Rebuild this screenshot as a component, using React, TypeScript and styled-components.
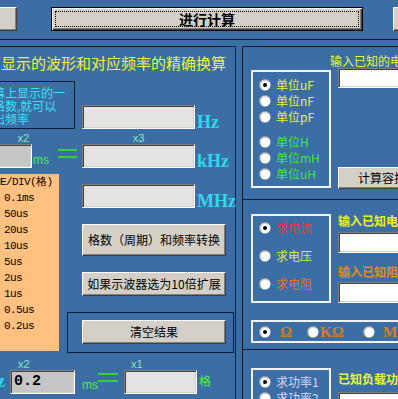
import React from "react";
import styled, { createGlobalStyle } from "styled-components";

const CJK = `"Noto Sans CJK SC", "Noto Sans", sans-serif`;
const LINE = "#0e1d33";
const BLUE = "#3a6ea5";

const GlobalStyle = createGlobalStyle`
  * { box-sizing: border-box; }
  html, body { margin: 0; padding: 0; background: ${BLUE}; }
  body { font-family: ${CJK}; }
`;

const Screen = styled.div`
  width: 398px;
  height: 399px;
  overflow: hidden;
  background: ${BLUE};
`;

const TopBar = styled.div`
  display: flex;
  align-items: flex-start;
  height: 40px;
  padding-top: 7px;
  border-bottom: 1px solid ${LINE};
`;

const FormButton = styled.div<{ $w: number; $h: number; $ml?: number; $mt?: number }>`
  flex: none;
  width: ${({ $w }) => $w}px;
  height: ${({ $h }) => $h}px;
  margin-left: ${({ $ml }) => $ml ?? 0}px;
  margin-top: ${({ $mt }) => $mt ?? 0}px;
  background: #d4d0c8;
  border: 1px solid;
  border-color: #fff #404040 #404040 #fff;
  box-shadow: inset -1px -1px 0 #808080;
  font: 12px/1 ${CJK};
  color: #000;
  display: flex;
  align-items: center;
  justify-content: center;
  white-space: nowrap;
  overflow: hidden;
`;

const DefaultButton = styled(FormButton)`
  border: 1px solid #000;
  box-shadow: inset 1px 1px 0 #fff, inset -1px -1px 0 #404040, inset -2px -2px 0 #808080;
  padding: 3px;
`;

const FocusRect = styled.div`
  flex: 1;
  align-self: stretch;
  border: 1px dotted #000;
  display: flex;
  align-items: center;
  justify-content: center;
  font: bold 14px/1 ${CJK};
`;

const Body = styled.div`
  display: flex;
  margin-top: 6px;
`;

const LeftPanel = styled.div`
  flex: none;
  width: 239px;
  height: 360px;
  margin-left: -3px;
  border: 1px solid ${LINE};
  border-bottom: none;
`;

const RightPanel = styled.div`
  flex: none;
  width: 200px;
  margin-left: 6px;
  border-top: 1px solid ${LINE};
  border-left: 1px solid ${LINE};
`;

const Title = styled.div<{ $color: string; $size?: number; $bold?: boolean; $mt?: number; $ml?: number }>`
  color: ${({ $color }) => $color};
  font: ${({ $bold }) => ($bold ? 700 : 400)} ${({ $size }) => $size ?? 12}px / ${({ $size }) => ($size ?? 12) + 2}px ${CJK};
  margin-top: ${({ $mt }) => $mt ?? 0}px;
  margin-left: ${({ $ml }) => $ml ?? 0}px;
  white-space: nowrap;
`;

const Row = styled.div<{ $mt: number; $align?: string }>`
  display: flex;
  align-items: ${({ $align }) => $align ?? "flex-start"};
  margin-top: ${({ $mt }) => $mt}px;
`;

const NoteFrame = styled.div`
  flex: none;
  width: 77px;
  height: 48px;
  border: 1px solid ${LINE};
  padding-top: 4px;
  overflow: hidden;
`;

const NoteLine = styled.div`
  margin-left: -6px;
  color: #3ee0f8;
  font: 12px/13px ${CJK};
  white-space: nowrap;
`;

const TextBox = styled.div<{ $w: number; $h: number; $tone?: "light" | "gray" | "white"; $ml?: number; $mt?: number }>`
  flex: none;
  width: ${({ $w }) => $w}px;
  height: ${({ $h }) => $h}px;
  margin-left: ${({ $ml }) => $ml ?? 0}px;
  margin-top: ${({ $mt }) => $mt ?? 0}px;
  background: ${({ $tone }) => ($tone === "gray" ? "#c6c6c6" : $tone === "white" ? "#ffffff" : "#e3e3e3")};
  border: 1px solid;
  border-color: #808080 #fff #fff #808080;
  box-shadow: inset 1px 1px 0 #404040, inset -1px -1px 0 #d4d0c8;
  padding: 3px 0 0 3px;
  font: bold 15px/15px "Liberation Mono", monospace;
  color: #000;
  white-space: nowrap;
  overflow: hidden;
`;

const UnitLabel = styled.div<{ $ml?: number; $mb?: number }>`
  flex: none;
  align-self: flex-end;
  margin-left: ${({ $ml }) => $ml ?? 2}px;
  margin-bottom: ${({ $mb }) => $mb ?? 0}px;
  color: #2fd8ec;
  font: bold 18px/18px "Liberation Serif", serif;
  white-space: nowrap;
`;

const SmallUnit = styled.div<{ $ml?: number; $mb?: number }>`
  flex: none;
  align-self: flex-end;
  margin-left: ${({ $ml }) => $ml ?? 0}px;
  margin-bottom: ${({ $mb }) => $mb ?? 0}px;
  color: #4cf04c;
  font: 12px/12px "Liberation Sans", ${CJK};
`;

const EqualSign = styled.div<{ $w: number; $ml?: number; $mt?: number; $mb?: number; $self: string }>`
  flex: none;
  align-self: ${({ $self }) => $self};
  width: ${({ $w }) => $w}px;
  height: 9px;
  margin-left: ${({ $ml }) => $ml ?? 0}px;
  margin-top: ${({ $mt }) => $mt ?? 0}px;
  margin-bottom: ${({ $mb }) => $mb ?? 0}px;
  border-top: 2px solid #35d035;
  border-bottom: 2px solid #35d035;
`;

const Field = styled.div<{ $ml?: number }>`
  flex: none;
  display: flex;
  flex-direction: column;
  margin-left: ${({ $ml }) => $ml ?? 0}px;
`;

const FieldLabel = styled.div<{ $align: "left" | "center" | "right"; $inset?: number }>`
  height: 11px;
  color: #86e8b4;
  font: 11px/11px "Liberation Sans", sans-serif;
  text-align: ${({ $align }) => $align};
  padding-left: ${({ $align, $inset }) => ($align === "left" ? $inset ?? 0 : 0)}px;
  padding-right: ${({ $align, $inset }) => ($align === "right" ? $inset ?? 0 : 0)}px;
`;

const TimeList = styled.div`
  flex: none;
  width: 61px;
  height: 177px;
  background: #ffc080;
  padding-left: 6px;
  overflow: hidden;
  color: #000;
  font: 11px/16px "Liberation Mono", monospace;
  letter-spacing: -0.6px;
`;

const TimeHead = styled.div`
  margin-left: -22px;
  white-space: nowrap;
`;

const ButtonColumn = styled.div`
  flex: none;
  width: 167px;
  margin-left: 8px;
  display: flex;
  flex-direction: column;
`;

const MhzRow = styled.div`
  display: flex;
  margin-top: 10px;
  padding-left: 15px;
`;

const ClearFrame = styled.div`
  height: 41px;
  margin-top: 16px;
  border: 1px solid ${LINE};
  padding: 7px 0 0 14px;
`;

const Section = styled.div<{ $h: number; $top?: boolean }>`
  height: ${({ $h }) => $h}px;
  border-top: ${({ $top }) => ($top ? `1px solid ${LINE}` : "none")};
`;

const SectionRow = styled.div`
  display: flex;
  align-items: flex-start;
`;

const RadioFrame = styled.div<{ $h: number; $mt: number; $pt: number }>`
  flex: none;
  width: 80px;
  height: ${({ $h }) => $h}px;
  margin: ${({ $mt }) => $mt}px 0 0 8px;
  border: 2px solid #f2f2f2;
  padding: ${({ $pt }) => $pt}px 0 0 6px;
`;

const RadioRow = styled.div<{ $color: string; $mt?: number }>`
  display: flex;
  align-items: center;
  gap: 5px;
  height: 16px;
  margin-top: ${({ $mt }) => $mt ?? 0}px;
  color: ${({ $color }) => $color};
  font: 12px/16px ${CJK};
  white-space: nowrap;
`;

const RightCol = styled.div`
  flex: none;
  width: 124px;
  margin-left: 7px;
  display: flex;
  flex-direction: column;
`;

const UnitFrame = styled.div`
  width: 160px;
  height: 23px;
  margin: 17px 0 0 8px;
  border: 2px solid #f2f2f2;
  padding-left: 6px;
  display: flex;
  align-items: center;
`;

const UnitOption = styled.div<{ $w: number; $gap: number }>`
  flex: none;
  width: ${({ $w }) => $w}px;
  display: flex;
  align-items: center;
  gap: ${({ $gap }) => $gap}px;
  color: #e07820;
  font: bold 15px/16px "Liberation Serif", serif;
`;

const Radio = ({ checked }: { checked?: boolean }) => (
  <svg width="12" height="12" viewBox="0 0 12 12" style={{ flex: "none" }}>
    <circle cx="6" cy="6" r="5.5" fill="#fff" />
    <path d="M9.9 2.1 A5.5 5.5 0 0 0 2.1 9.9" stroke="#9a9a9a" fill="none" />
    <path d="M9.2 2.8 A4.5 4.5 0 0 0 2.8 9.2" stroke="#c8c8c8" fill="none" />
    {checked && <circle cx="6" cy="6" r="2" fill="#000" />}
  </svg>
);

const timeItems = ["0.1ms", "50us", "20us", "10us", "5us", "2us", "1us", "0.5us", "0.2us"];

export default function App() {
  return (
    <Screen>
      <GlobalStyle />
      <TopBar>
        <FormButton $w={30} $h={24} $ml={-13} />
        <DefaultButton $w={312} $h={24} $ml={34}>
          <FocusRect>进行计算</FocusRect>
        </DefaultButton>
        <FormButton $w={40} $h={24} $ml={30} />
      </TopBar>

      <Body>
        <LeftPanel>
          <Title $color="#ecf53a" $size={15} $mt={7} $ml={3}>
            显示的波形和对应频率的精确换算
          </Title>

          <Row $mt={10}>
            <NoteFrame>
              <NoteLine>幕上显示的一</NoteLine>
              <NoteLine>格数,就可以</NoteLine>
              <NoteLine>出频率</NoteLine>
            </NoteFrame>
            <TextBox $w={113} $h={24} $ml={7} $mt={24} />
            <UnitLabel $mb={-2}>Hz</UnitLabel>
          </Row>

          <Row $mt={4} $align="flex-end">
            <Field>
              <FieldLabel $align="right" $inset={3}>x2</FieldLabel>
              <TextBox $w={34} $h={24} $tone="gray" />
            </Field>
            <SmallUnit $ml={1} $mb={2}>ms</SmallUnit>
            <EqualSign $w={19} $ml={9} $mt={16} $self="flex-start" />
            <Field $ml={5}>
              <FieldLabel $align="center">x3</FieldLabel>
              <TextBox $w={113} $h={24} />
            </Field>
            <UnitLabel $mb={-2}>kHz</UnitLabel>
          </Row>

          <Row $mt={6}>
            <TimeList>
              <TimeHead>TIME/DIV(格)</TimeHead>
              {timeItems.map((t) => (
                <div key={t}>{t}</div>
              ))}
            </TimeList>
            <ButtonColumn>
              <MhzRow>
                <TextBox $w={113} $h={24} />
                <UnitLabel $mb={-2}>MHz</UnitLabel>
              </MhzRow>
              <FormButton $w={144} $h={32} $ml={15} $mt={16}>
                格数（周期）和频率转换
              </FormButton>
              <FormButton $w={144} $h={24} $ml={15} $mt={16}>
                如果示波器选为10倍扩展
              </FormButton>
              <ClearFrame>
                <FormButton $w={144} $h={24}>清空结果</FormButton>
              </ClearFrame>
            </ButtonColumn>
          </Row>

          <Row $mt={6} $align="flex-end">
            <UnitLabel $ml={-15} $mb={4}>Hz</UnitLabel>
            <Field $ml={5}>
              <FieldLabel $align="left" $inset={8}>x2</FieldLabel>
              <TextBox $w={65} $h={24} $tone="gray">0.2</TextBox>
            </Field>
            <SmallUnit $ml={7} $mb={3}>ms</SmallUnit>
            <EqualSign $w={20} $mb={12} $self="flex-end" />
            <Field $ml={6}>
              <FieldLabel $align="left" $inset={7}>x1</FieldLabel>
              <TextBox $w={73} $h={24} />
            </Field>
            <SmallUnit $ml={2} $mb={6}>格</SmallUnit>
          </Row>
        </LeftPanel>

        <RightPanel>
          <Section $h={152}>
            <SectionRow>
              <RadioFrame $h={118} $mt={23} $pt={5}>
                <RadioRow $color="#ecf53a"><Radio checked />单位uF</RadioRow>
                <RadioRow $color="#ecf53a"><Radio />单位nF</RadioRow>
                <RadioRow $color="#ecf53a"><Radio />单位pF</RadioRow>
                <RadioRow $color="#3ee83e" $mt={9}><Radio />单位H</RadioRow>
                <RadioRow $color="#3ee83e"><Radio />单位mH</RadioRow>
                <RadioRow $color="#3ee83e"><Radio />单位uH</RadioRow>
              </RadioFrame>
              <RightCol>
                <Title $color="#ecf53a" $mt={7} $ml={-8}>输入已知的电容或电感值</Title>
                <TextBox $w={124} $h={20} $tone="white" />
                <FormButton $w={124} $h={22} $mt={79}>计算容抗和感抗</FormButton>
              </RightCol>
            </SectionRow>
          </Section>

          <Section $h={150} $top>
            <SectionRow>
              <RadioFrame $h={89} $mt={14} $pt={4}>
                <RadioRow $color="#f03040"><Radio checked />求电流</RadioRow>
                <RadioRow $color="#d8f040" $mt={12}><Radio />求电压</RadioRow>
                <RadioRow $color="#e07820" $mt={12}><Radio />求电阻</RadioRow>
              </RadioFrame>
              <RightCol>
                <Title $color="#f0f020" $bold $mt={14}>输入已知电流或电压</Title>
                <TextBox $w={124} $h={21} $tone="white" $mt={4} />
                <Title $color="#e88a10" $bold $mt={12}>输入已知阻值</Title>
                <TextBox $w={124} $h={21} $tone="white" $mt={3} />
              </RightCol>
            </SectionRow>
            <UnitFrame>
              <UnitOption $w={48} $gap={9}><Radio checked />Ω</UnitOption>
              <UnitOption $w={56} $gap={1}><Radio />KΩ</UnitOption>
              <UnitOption $w={56} $gap={8}><Radio />MΩ</UnitOption>
            </UnitFrame>
          </Section>

          <Section $h={60} $top>
            <SectionRow>
              <RadioFrame $h={60} $mt={18} $pt={4}>
                <RadioRow $color="#dcd4ff"><Radio checked />求功率1</RadioRow>
                <RadioRow $color="#dcd4ff"><Radio />求功率2</RadioRow>
              </RadioFrame>
              <RightCol>
                <Title $color="#ecf53a" $bold $mt={22}>已知负载功率</Title>
                <TextBox $w={124} $h={21} $tone="white" $mt={6} />
              </RightCol>
            </SectionRow>
          </Section>
        </RightPanel>
      </Body>
    </Screen>
  );
}
